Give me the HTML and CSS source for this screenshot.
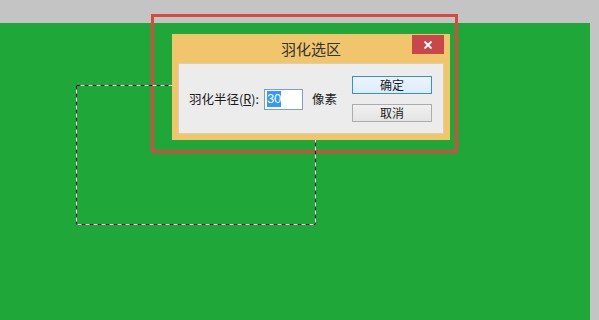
FILE: index.html
```html
<!DOCTYPE html>
<html lang="zh-CN">
<head>
    <meta charset="UTF-8">
    <meta name="viewport" content="width=device-width, initial-scale=1.0">
    <title>羽化选区</title>
    <link rel="stylesheet" href="styles.css">
</head>
<body>
    <div class="stage">
        <div class="canvas"></div>

        <div class="highlight"></div>

        <svg class="marquee" width="241" height="141" viewBox="0 0 241 141">
            <rect x="0.5" y="0.5" width="239" height="139" fill="none" stroke="#ffffff" stroke-width="1"/>
            <rect x="0.5" y="0.5" width="239" height="139" fill="none" stroke="#111111" stroke-width="1" stroke-dasharray="4 4"/>
        </svg>

        <div class="dialog">
            <div class="titlebar">
                <span class="title">羽化选区</span>
                <button class="close">
                    <svg width="10" height="10" viewBox="0 0 10 10">
                        <path d="M1.5 1.5 L8.5 8.5 M8.5 1.5 L1.5 8.5" stroke="#ffffff" stroke-width="1.8"/>
                    </svg>
                </button>
            </div>
            <div class="panel">
                <div class="field">
                    <span class="label">羽化半径(<u>R</u>):</span>
                    <div class="input"><span class="selected">30</span></div>
                    <span class="unit">像素</span>
                </div>
                <div class="actions">
                    <button class="btn default">确定</button>
                    <button class="btn">取消</button>
                </div>
            </div>
        </div>
    </div>
</body>
</html>
```

FILE: styles.css
```css
body {
    margin: 0;
    background-color: #c4c4c4;
    font-family: "Noto Sans CJK SC", "Liberation Sans", sans-serif;
}

.stage {
    position: relative;
    width: 599px;
    height: 320px;
    overflow: hidden;
    background-color: #c4c4c4;
}

.canvas {
    margin-top: 23px;
    width: 590px;
    height: 297px;
    background-color: #20a73a;
}

.marquee {
    position: absolute;
    left: 76px;
    top: 85px;
}

.highlight {
    position: absolute;
    left: 151px;
    top: 14px;
    width: 301px;
    height: 133px;
    border: 3px solid #d9493f;
}

.dialog {
    position: absolute;
    left: 172px;
    top: 34px;
    width: 278px;
    height: 106px;
    background-color: #f0c56b;
    display: flex;
    flex-direction: column;
}

.titlebar {
    position: relative;
    height: 29px;
    display: flex;
    justify-content: center;
    align-items: center;
}

.title {
    font-size: 15px;
    line-height: 18px;
    color: #333333;
    padding-top: 1px;
}

.close {
    position: absolute;
    right: 6px;
    top: 1px;
    width: 32px;
    height: 19px;
    border: none;
    padding: 0;
    background-color: #c8474a;
    display: flex;
    justify-content: center;
    align-items: center;
}

.panel {
    margin: 0 6px;
    height: 71px;
    box-sizing: border-box;
    border: 1px solid #dccfaa;
    background-color: #ececec;
    display: flex;
    align-items: center;
    padding: 0 11px 0 10px;
}

.field {
    display: flex;
    align-items: center;
    font-size: 12.5px;
    line-height: 16px;
    color: #1a1a1a;
    padding-top: 1px;
}

.label {
    margin-right: 5px;
}

.input {
    width: 39px;
    height: 21px;
    box-sizing: border-box;
    border: 1px solid #7d9fca;
    background-color: #ffffff;
    padding: 1px 2px;
    display: flex;
    align-items: center;
    font-family: "Liberation Sans", sans-serif;
    font-size: 13px;
}

.selected {
    background-color: #3399ff;
    color: #ffffff;
    line-height: 16px;
}

.unit {
    margin-left: 9px;
}

.actions {
    margin-left: auto;
    display: flex;
    flex-direction: column;
    gap: 10px;
}

.btn {
    width: 80px;
    height: 18px;
    padding: 0;
    font-family: "Noto Sans CJK SC", sans-serif;
    font-size: 12px;
    line-height: 14px;
    color: #1a1a1a;
    border: 1px solid #acacac;
    background: linear-gradient(#f0f0f0, #e4e4e4);
}

.btn.default {
    border-color: #3c8fd6;
    background: linear-gradient(#ecf4fc, #dcecfc);
}
```
